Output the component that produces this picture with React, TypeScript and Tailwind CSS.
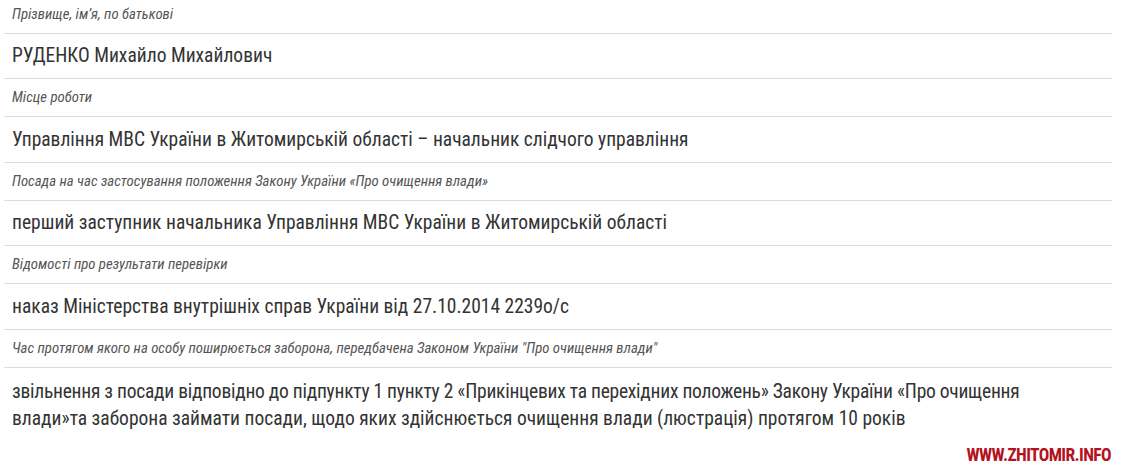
const rows: { label: string; value: React.ReactNode; valueH: string }[] = [
  {
    label: 'Прізвище, імʼя, по батькові',
    value: 'РУДЕНКО Михайло Михайлович',
    valueH: 'h-[45px]',
  },
  {
    label: 'Місце роботи',
    value: 'Управління МВС України в Житомирській області – начальник слідчого управління',
    valueH: 'h-[46px]',
  },
  {
    label: 'Посада на час застосування положення Закону України «Про очищення влади»',
    value: 'перший заступник начальника Управління МВС України в Житомирській області',
    valueH: 'h-[45px]',
  },
  {
    label: 'Відомості про результати перевірки',
    value: 'наказ Міністерства внутрішніх справ України від 27.10.2014 2239о/с',
    valueH: 'h-[46px]',
  },
];

export default function App() {
  return (
    <div className="relative h-[470px] overflow-hidden bg-white font-['Roboto',sans-serif] font-stretch-condensed">
      <div className="-mt-[4px] ml-[4px] w-[1108px]">
        {rows.map((r) => (
          <div key={r.label}>
            <div className="flex h-[38px] items-center border-b border-[#dcdcdc] px-[8px] text-[14.8px] italic text-[#555]">
              {r.label}
            </div>
            <div
              className={`flex ${r.valueH} items-center border-b border-[#dcdcdc] px-[8px] text-[19.5px] text-[#333]`}
            >
              {r.value}
            </div>
          </div>
        ))}
        <div className="flex h-[38px] items-center border-b border-[#dcdcdc] px-[8px] text-[14.8px] italic text-[#555]">
          Час протягом якого на особу поширюється заборона, передбачена Законом України "Про очищення влади"
        </div>
        <div className="px-[8px] pt-[10px] text-[19.5px] leading-[27px] text-[#333]">
          <span className="tracking-[-0.25px]">
            звільнення з посади відповідно до підпункту 1 пункту 2 «Прикінцевих та перехідних положень» Закону України «Про очищення
          </span>
          <br />
          влади»та заборона займати посади, щодо яких здійснюється очищення влади (люстрація) протягом 10 років
        </div>
      </div>
      <div className="absolute bottom-[6px] right-[12px] text-[17.5px] font-bold leading-none tracking-[-0.6px] text-[#b3121c]">
        WWW.ZHITOMIR.INFO
      </div>
    </div>
  );
}
